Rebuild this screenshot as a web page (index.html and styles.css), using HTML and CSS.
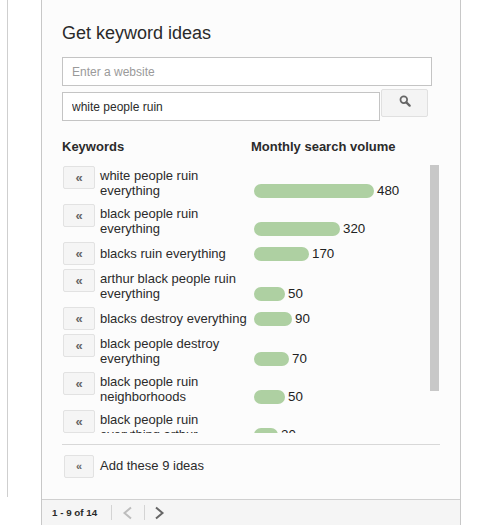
FILE: index.html
```html
<!DOCTYPE html>
<html lang="en">
<head>
<meta charset="utf-8">
<title>Get keyword ideas</title>
<link rel="stylesheet" href="styles.css">
</head>
<body>
<div class="page">
  <div class="sliver"></div>
  <section class="panel">
    <div class="content">
      <h1 class="title">Get keyword ideas</h1>
      <input class="field field-wide" type="text" placeholder="Enter a website">
      <div class="search-row">
        <input class="field field-query" type="text" value="white people ruin">
        <button class="search-btn" type="button" aria-label="Search">
          <svg width="12" height="12" viewBox="0 0 14 14" aria-hidden="true"><circle cx="5.6" cy="5.6" r="3.9" fill="none" stroke="#666" stroke-width="2"/><path d="M8.6 8.6L12.4 12.4" stroke="#666" stroke-width="2.6" stroke-linecap="round"/></svg>
        </button>
      </div>
      <div class="heads">
        <div class="head head-kw">Keywords</div>
        <div class="head">Monthly search volume</div>
      </div>
      <div class="list-wrap">
        <div class="list">
          <div class="row"><div class="kw"><button class="add" type="button">«</button><span class="kw-text">white people ruin everything</span></div><div class="vol"><span class="bar bar-480"></span><span class="num">480</span></div></div>
          <div class="row"><div class="kw"><button class="add" type="button">«</button><span class="kw-text">black people ruin everything</span></div><div class="vol"><span class="bar bar-320"></span><span class="num">320</span></div></div>
          <div class="row row-single"><div class="kw"><button class="add" type="button">«</button><span class="kw-text">blacks ruin everything</span></div><div class="vol"><span class="bar bar-170"></span><span class="num">170</span></div></div>
          <div class="row"><div class="kw"><button class="add" type="button">«</button><span class="kw-text">arthur black people ruin everything</span></div><div class="vol"><span class="bar bar-50"></span><span class="num">50</span></div></div>
          <div class="row row-single"><div class="kw"><button class="add" type="button">«</button><span class="kw-text">blacks destroy everything</span></div><div class="vol"><span class="bar bar-90"></span><span class="num">90</span></div></div>
          <div class="row"><div class="kw"><button class="add" type="button">«</button><span class="kw-text">black people destroy everything</span></div><div class="vol"><span class="bar bar-70"></span><span class="num">70</span></div></div>
          <div class="row"><div class="kw"><button class="add" type="button">«</button><span class="kw-text">black people ruin neighborhoods</span></div><div class="vol"><span class="bar bar-50"></span><span class="num">50</span></div></div>
          <div class="row"><div class="kw"><button class="add" type="button">«</button><span class="kw-text">black people ruin everything arthur</span></div><div class="vol"><span class="bar bar-20"></span><span class="num">20</span></div></div>
        </div>
        <div class="scrollbar"></div>
      </div>
      <div class="add-all">
        <button class="add add-small" type="button">«</button>
        <span class="kw-text">Add these 9 ideas</span>
      </div>
    </div>
    <footer class="pager">
      <span class="count">1 - 9 of 14</span>
      <span class="pager-btn">
        <svg width="12" height="16" viewBox="0 0 12 16" aria-hidden="true"><path d="M10 2.5L3.5 8l6.500 5.500" fill="none" stroke="#bdbdbd" stroke-width="2"/></svg>
      </span>
      <span class="pager-btn">
        <svg width="12" height="16" viewBox="0 0 12 16" aria-hidden="true"><path d="M2 2.500L8.500 8 2 13.500" fill="none" stroke="#666" stroke-width="2"/></svg>
      </span>
    </footer>
  </section>
</div>
</body>
</html>
```

FILE: styles.css
```css
* { box-sizing: border-box; }
html, body { margin: 0; padding: 0; background: #fff; }
body {
  font-family: "Liberation Sans", Arial, sans-serif;
  color: #2b2b2b;
  overflow: hidden;
}
.page { display: flex; align-items: flex-start; height: 525px; overflow: hidden; }
.sliver {
  width: 8px;
  height: 497px;
  border-right: 1px solid #cfcfcf;
  flex: none;
}
.panel {
  margin-left: 33px;
  width: 420px;
  height: 525px;
  flex: none;
  display: flex;
  flex-direction: column;
  background: #fcfcfc;
  border-left: 1px solid #c8c8c8;
  border-right: 1px solid #c8c8c8;
}
.content { flex: 1; padding: 0 0 0 20px; min-height: 0; }
.title {
  margin: 0;
  padding-top: 23px;
  font-size: 18px;
  line-height: 21px;
  font-weight: 400;
  color: #2a2a2a;
}
.field {
  display: block;
  height: 29px;
  padding: 0 9px;
  border: 1px solid #c4c4c4;
  border-radius: 0;
  background: #fff;
  font: 12px "Liberation Sans", Arial, sans-serif;
  color: #2b2b2b;
  outline: none;
}
.field::placeholder { color: #9a9a9a; opacity: 1; }
.field-wide { width: 370px; margin-top: 13px; }
.search-row { display: flex; align-items: flex-start; margin-top: 3px; }
.field-query { width: 318px; margin-top: 3px; }
.search-btn {
  width: 47px;
  height: 28px;
  margin-left: 1px;
  padding: 0 0 4px;
  border: 1px solid #e0e0e0;
  border-radius: 2px;
  background: #f4f4f4;
  display: flex;
  align-items: center;
  justify-content: center;
}
.heads { display: flex; margin-top: 18px; }
.head { font-size: 13px; line-height: 16px; font-weight: 700; color: #2b2b2b; white-space: nowrap; }
.head-kw { width: 189px; }
.list-wrap { display: flex; margin-top: 10px; height: 268px; }
.list { width: 368px; height: 268px; overflow: hidden; flex: none; }
.row { display: flex; height: 38px; }
.row-single { height: 27px; }
.kw { width: 192px; display: flex; align-items: flex-start; flex: none; padding: 1px 0 0 1px; }
.add {
  flex: none;
  width: 32px;
  height: 23px;
  margin-right: 5px;
  padding: 0;
  border: 1px solid #e2e2e2;
  border-radius: 2px;
  background: #f5f5f5;
  font: 700 13px/19px "Liberation Sans", Arial, sans-serif;
  color: #666;
}
.kw-text {
  font-size: 13px;
  line-height: 15px;
  color: #2b2b2b;
  margin-top: 2px;
}
.row-single .kw-text { margin-top: 4px; }
.vol {
  display: flex;
  align-items: flex-end;
  gap: 3px;
  padding-bottom: 5px;
  font-size: 13.33px;
  line-height: 14px;
  color: #222;
}
.row-single .vol { padding-bottom: 7px; }
.bar { display: block; height: 14px; border-radius: 7px; background: #aed0a2; }
.bar-480 { width: 120px; }
.bar-320 { width: 86px; }
.bar-170 { width: 55px; }
.bar-90 { width: 38px; }
.bar-70 { width: 35px; }
.bar-50 { width: 31px; }
.bar-20 { width: 24px; }
.num { display: block; }
.scrollbar { width: 9px; height: 226px; background: #c8c8c8; flex: none; }
.add-all {
  display: flex;
  align-items: center;
  width: 378px;
  margin-top: 11px;
  padding: 10px 0 0 2px;
  border-top: 1px solid #d8d8d8;
}
.add-small { width: 30px; height: 23px; margin-right: 6px; font-size: 11px; }
.add-all .kw-text { margin-top: -2px; }
.pager {
  height: 26px;
  flex: none;
  display: flex;
  align-items: center;
  padding-left: 10px;
  border-top: 1px solid #d0d0d0;
  background: #f5f5f5;
}
.count { width: 59px; font-size: 9.8px; font-weight: 700; color: #2b2b2b; white-space: nowrap; }
.pager-btn {
  width: 33px;
  height: 15px;
  display: flex;
  align-items: center;
  padding-left: 9px;
  border-left: 1px solid #d4d4d4;
}
```
